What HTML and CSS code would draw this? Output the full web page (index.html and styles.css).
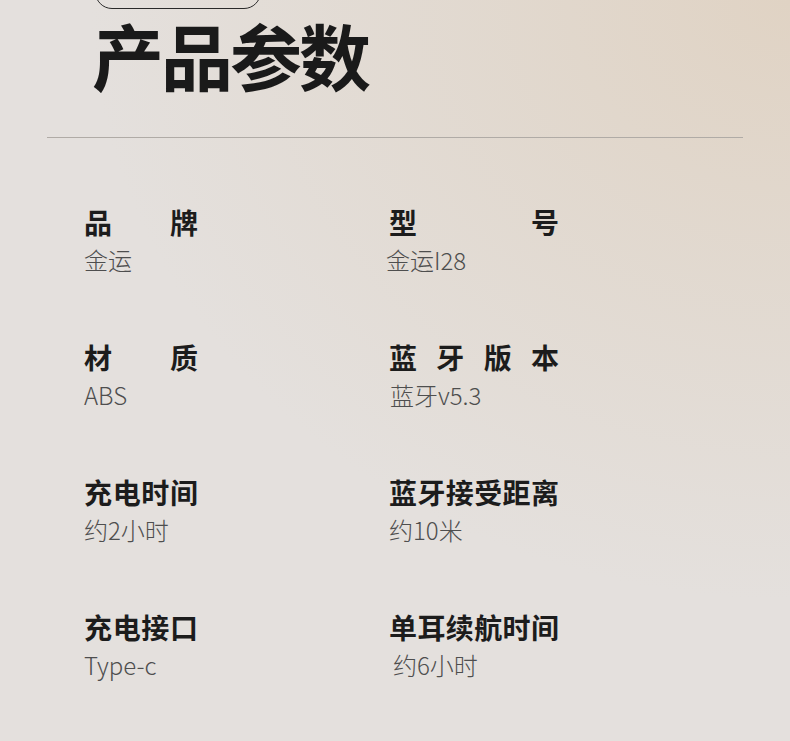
FILE: index.html
```html
<!DOCTYPE html>
<html>
<head>
    <title>产品参数</title>
    <link rel="stylesheet" href="styles.css">
</head>
<body>
    <div class="page">
        <div class="head">
            <div class="pill"></div>
            <h1 class="title">产品参数</h1>
        </div>
        <hr class="divider">
        <div class="specs">
            <div class="spec">
                <div class="label short">品牌</div>
                <div class="value">金运</div>
            </div>
            <div class="spec">
                <div class="label long">型号</div>
                <div class="value shift-l">金运I28</div>
            </div>
            <div class="spec">
                <div class="label short">材质</div>
                <div class="value">ABS</div>
            </div>
            <div class="spec">
                <div class="label long">蓝牙版本</div>
                <div class="value shift-r">蓝牙v5.3</div>
            </div>
            <div class="spec">
                <div class="label short">充电时间</div>
                <div class="value">约2小时</div>
            </div>
            <div class="spec">
                <div class="label long">蓝牙接受距离</div>
                <div class="value">约10米</div>
            </div>
            <div class="spec">
                <div class="label short">充电接口</div>
                <div class="value">Type-c</div>
            </div>
            <div class="spec">
                <div class="label long">单耳续航时间</div>
                <div class="value shift-rr">约6小时</div>
            </div>
        </div>
    </div>
</body>
</html>
```

FILE: styles.css
```css
html, body {
    height: 100%;
}
body {
    margin: 0;
    font-family: "Noto Sans CJK SC", "Noto Sans", sans-serif;
    background-color: #e4e0dd;
    background-image: radial-gradient(ellipse 700px 600px at 100% 0%, #e0d3c4 0%, rgba(224, 213, 200, 0.65) 45%, rgba(228, 224, 221, 0) 100%);
    color: #1c1c1c;
    overflow: hidden;
}
.page {
    width: 790px;
}
.head {
    padding-left: 95px;
}
.pill {
    width: 164px;
    height: 34px;
    margin-top: -27px;
    border: 1.5px solid #2a2a2a;
    border-radius: 17px;
}
.title {
    margin: 3px 0 0 -3px;
    font-size: 72px;
    line-height: 84px;
    font-weight: 700;
    letter-spacing: -3px;
    color: #1a1a1a;
}
.divider {
    margin: 41px 47px 0 47px;
    border: none;
    border-top: 1.5px solid #b0aba6;
    height: 0;
}
.specs {
    display: grid;
    grid-template-columns: 305px 300px;
    row-gap: 60px;
    padding: 66px 0 0 84px;
}
.label {
    font-size: 28px;
    line-height: 36px;
    font-weight: 700;
    color: #1c1c1c;
    text-align: justify;
    text-align-last: justify;
}
.label.short {
    width: 114px;
}
.label.long {
    width: 170px;
}
.value {
    margin-top: 1px;
    font-size: 24px;
    line-height: 38px;
    font-weight: 300;
    color: #4e4e4e;
}
.shift-l {
    margin-left: -3px;
}
.shift-r {
    margin-left: 1px;
}
.shift-rr {
    margin-left: 4px;
}
```
